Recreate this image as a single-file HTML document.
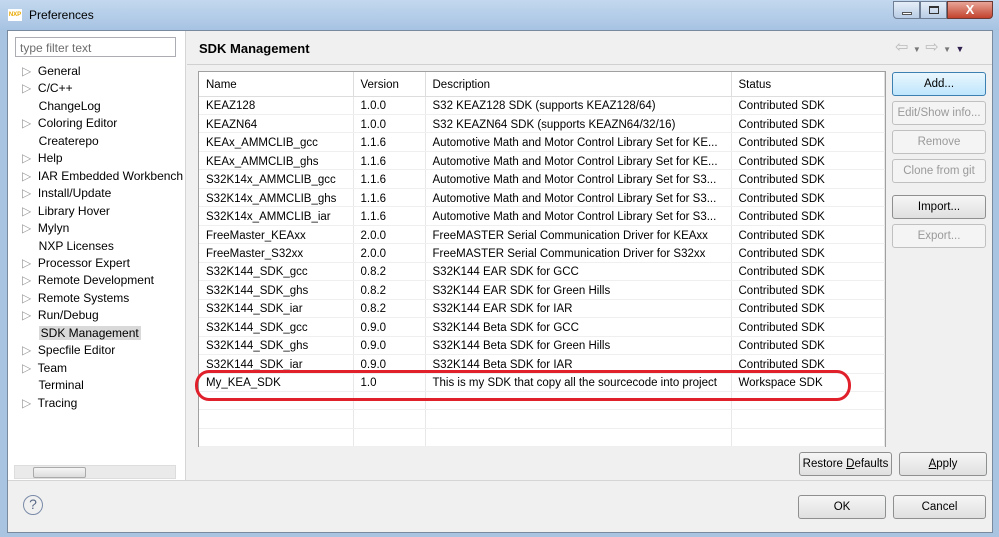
<!DOCTYPE html><html><head><style>
*{margin:0;padding:0;box-sizing:border-box}
body{width:999px;height:537px;overflow:hidden;background:#a9c4e0;font-family:"Liberation Sans",sans-serif;font-size:11.5px;color:#000;position:relative}
.a{position:absolute}
.t{white-space:nowrap}
.btn{position:absolute;border:1px solid #8e8f8f;border-radius:3px;background:linear-gradient(#f6f6f6,#e0e0e0);text-align:center;font-size:11.5px;line-height:22px;color:#000}
.dis{color:#9a9a9a;border-color:#c0c0c0;background:#f4f4f4}
table{border-collapse:collapse;position:absolute;left:199px;top:72px;width:686px;background:#fff}
td{height:18.47px;border-right:1px solid #e8e8e8;border-bottom:1px solid #efefef;padding-left:7px;padding-top:2px;white-space:nowrap;overflow:hidden;font-size:11.5px}
th{height:24px;font-weight:normal;text-align:left;padding-left:7px;padding-top:3px;border-right:1px solid #ddd;border-bottom:1px solid #ddd;background:#fff}
</style></head><body>
<div class="a" style="left:0;top:0;width:999px;height:30px;background:linear-gradient(#c3d8ee,#a7c3e3)"></div>
<div class="a" style="left:8px;top:9px;width:14px;height:12px;background:#fff"><div style="font-size:6px;font-weight:bold;color:#e8a800;line-height:12px;text-align:center">NXP</div></div>
<div class="a t" style="left:29px;top:8px;font-size:12px">Preferences</div>
<div class="a" style="left:893px;top:1px;width:27px;height:18px;border:1px solid #6d7e95;border-radius:0 0 0 4px;background:linear-gradient(#e5eef8,#b9cde5)"><div style="margin:10px auto 0;width:10px;height:3px;border:1px solid #555;background:#fff"></div></div>
<div class="a" style="left:920px;top:1px;width:27px;height:18px;border:1px solid #6d7e95;background:linear-gradient(#e5eef8,#b9cde5)"><div style="margin:4px auto;width:10px;height:8px;border:1px solid #333;border-top-width:2px"></div></div>
<div class="a" style="left:947px;top:1px;width:46px;height:18px;border:1px solid #6d3a33;border-radius:0 0 4px 0;background:linear-gradient(#e8a598,#c3422e);color:#fff;font-weight:bold;text-align:center;line-height:16px;font-size:13px">X</div>
<div class="a" style="left:7px;top:30px;width:986px;height:503px;background:#f0f0f0;border:1px solid #7a8a9e"></div>
<div class="a" style="left:8px;top:31px;width:178px;height:449px;background:#fff;border-right:1px solid #d5d5d5"></div>
<div class="a t" style="left:15px;top:37px;width:161px;height:20px;border:1px solid #abadb3;background:#fff;color:#6d6d6d;padding:3px 4px;font-size:12px">type filter text</div>
<div class="a" style="left:22px;top:63px;font-size:12px;line-height:17.45px;white-space:pre;color:#000"><span style="color:#999">▷</span>  General
<span style="color:#999">▷</span>  C/C++
     ChangeLog
<span style="color:#999">▷</span>  Coloring Editor
     Createrepo
<span style="color:#999">▷</span>  Help
<span style="color:#999">▷</span>  IAR Embedded Workbench
<span style="color:#999">▷</span>  Install/Update
<span style="color:#999">▷</span>  Library Hover
<span style="color:#999">▷</span>  Mylyn
     NXP Licenses
<span style="color:#999">▷</span>  Processor Expert
<span style="color:#999">▷</span>  Remote Development
<span style="color:#999">▷</span>  Remote Systems
<span style="color:#999">▷</span>  Run/Debug
     <span style="background:#d9d9d9;padding:0 2px">SDK Management</span>
<span style="color:#999">▷</span>  Specfile Editor
<span style="color:#999">▷</span>  Team
     Terminal
<span style="color:#999">▷</span>  Tracing</div>
<div class="a" style="left:14px;top:465px;width:162px;height:14px;background:#eaeaea;border:1px solid #ddd"><div style="position:absolute;left:18px;top:1px;width:53px;height:11px;background:linear-gradient(#f5f5f5,#dcdcdc);border:1px solid #aaa;border-radius:2px"></div></div>
<div class="a t" style="left:199px;top:41px;font-size:13px;font-weight:bold">SDK Management</div>
<div class="a" style="left:187px;top:64px;width:805px;height:1px;background:#d0d0d0"></div>
<div class="a t" style="left:895px;top:37px;color:#bbb;font-size:16px">⇦ <span style="font-size:8px;color:#777">▼</span> ⇨ <span style="font-size:8px;color:#777">▼</span> <span style="font-size:9px;color:#302050">▼</span></div>
<div class="a" style="left:198px;top:71px;width:688px;height:376px;border:1px solid #a0a0a0;background:#fff"></div>
<table>
<tr><th style="width:154px">Name</th><th style="width:72px">Version</th><th style="width:306px">Description</th><th>Status</th></tr>
<tr><td>KEAZ128</td><td>1.0.0</td><td>S32 KEAZ128 SDK  (supports KEAZ128/64)</td><td>Contributed SDK</td></tr>
<tr><td>KEAZN64</td><td>1.0.0</td><td>S32 KEAZN64 SDK (supports KEAZN64/32/16)</td><td>Contributed SDK</td></tr>
<tr><td>KEAx_AMMCLIB_gcc</td><td>1.1.6</td><td>Automotive Math and Motor Control Library Set for KE...</td><td>Contributed SDK</td></tr>
<tr><td>KEAx_AMMCLIB_ghs</td><td>1.1.6</td><td>Automotive Math and Motor Control Library Set for KE...</td><td>Contributed SDK</td></tr>
<tr><td>S32K14x_AMMCLIB_gcc</td><td>1.1.6</td><td>Automotive Math and Motor Control Library Set for S3...</td><td>Contributed SDK</td></tr>
<tr><td>S32K14x_AMMCLIB_ghs</td><td>1.1.6</td><td>Automotive Math and Motor Control Library Set for S3...</td><td>Contributed SDK</td></tr>
<tr><td>S32K14x_AMMCLIB_iar</td><td>1.1.6</td><td>Automotive Math and Motor Control Library Set for S3...</td><td>Contributed SDK</td></tr>
<tr><td>FreeMaster_KEAxx</td><td>2.0.0</td><td>FreeMASTER Serial Communication Driver for KEAxx</td><td>Contributed SDK</td></tr>
<tr><td>FreeMaster_S32xx</td><td>2.0.0</td><td>FreeMASTER Serial Communication Driver for S32xx</td><td>Contributed SDK</td></tr>
<tr><td>S32K144_SDK_gcc</td><td>0.8.2</td><td>S32K144 EAR SDK for GCC</td><td>Contributed SDK</td></tr>
<tr><td>S32K144_SDK_ghs</td><td>0.8.2</td><td>S32K144 EAR SDK for Green Hills</td><td>Contributed SDK</td></tr>
<tr><td>S32K144_SDK_iar</td><td>0.8.2</td><td>S32K144 EAR SDK for IAR</td><td>Contributed SDK</td></tr>
<tr><td>S32K144_SDK_gcc</td><td>0.9.0</td><td>S32K144 Beta SDK for GCC</td><td>Contributed SDK</td></tr>
<tr><td>S32K144_SDK_ghs</td><td>0.9.0</td><td>S32K144 Beta SDK for Green Hills</td><td>Contributed SDK</td></tr>
<tr><td>S32K144_SDK_iar</td><td>0.9.0</td><td>S32K144 Beta SDK for IAR</td><td>Contributed SDK</td></tr>
<tr><td>My_KEA_SDK</td><td>1.0</td><td>This is my SDK that copy all the sourcecode into project</td><td>Workspace SDK</td></tr>
<tr><td></td><td></td><td></td><td></td></tr>
<tr><td></td><td></td><td></td><td></td></tr>
<tr><td style="height:18px"></td><td></td><td></td><td></td></tr>
</table>
<div class="a" style="left:195px;top:370px;width:656px;height:31px;border:3px solid #e0202a;border-radius:14px/15px"></div>
<div class="btn" style="left:892px;top:72px;width:94px;height:24px;border-color:#3c7fb1;background:linear-gradient(#eaf6fd,#bee6fd)">Add...</div>
<div class="btn dis" style="left:892px;top:101px;width:94px;height:24px">Edit/Show info...</div>
<div class="btn dis" style="left:892px;top:130px;width:94px;height:24px">Remove</div>
<div class="btn dis" style="left:892px;top:159px;width:94px;height:24px">Clone from git</div>
<div class="btn" style="left:892px;top:195px;width:94px;height:24px">Import...</div>
<div class="btn dis" style="left:892px;top:224px;width:94px;height:24px">Export...</div>
<div class="btn" style="left:799px;top:452px;width:93px;height:24px">Restore <u>D</u>efaults</div>
<div class="btn" style="left:899px;top:452px;width:88px;height:24px"><u>A</u>pply</div>
<div class="a" style="left:8px;top:480px;width:984px;height:1px;background:#d5d5d5"></div>
<div class="a" style="left:23px;top:495px;width:20px;height:20px;border:1.5px solid #7a8aa8;border-radius:50%;text-align:center;line-height:17px;color:#5a6a88;font-size:14px">?</div>
<div class="btn" style="left:798px;top:495px;width:88px;height:24px">OK</div>
<div class="btn" style="left:893px;top:495px;width:93px;height:24px">Cancel</div>
</body></html>
